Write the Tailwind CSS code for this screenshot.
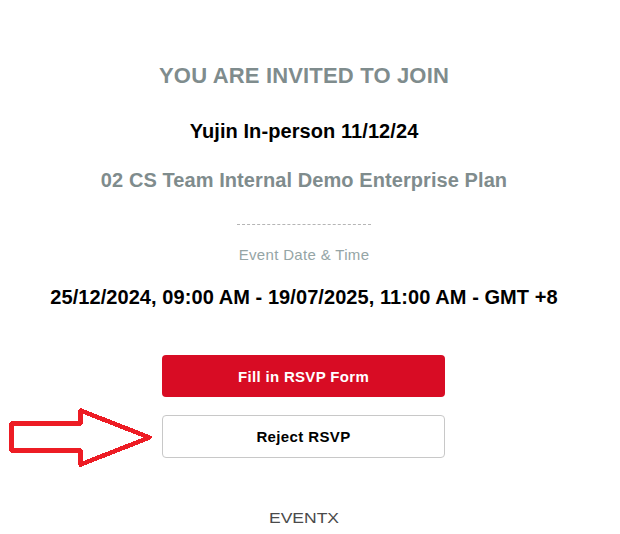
<!DOCTYPE html>
<html lang="en">
  <head>
    <meta charset="UTF-8" />
    <meta name="viewport" content="width=device-width, initial-scale=1.0" />
    <title>Event Invitation</title>
    <script src="https://cdn.jsdelivr.net/npm/@tailwindcss/browser@4"></script>
  </head>
  <body class="bg-white h-screen overflow-hidden font-['Liberation_Sans',Arial,sans-serif]">
    <main class="relative flex flex-col items-center w-[608px] pt-[61px] whitespace-nowrap text-black">
      <!-- Heading -->
      <h1 class="text-[22px] leading-[30px] font-bold tracking-[0.17px] text-[#7f8c8d]">
        YOU ARE INVITED TO JOIN
      </h1>
      <h2 class="mt-[25px] text-[20px] leading-[30px] font-bold tracking-[0.08px]">
        Yujin In-person 11/12/24
      </h2>
      <h3 class="mt-[19px] text-[20px] leading-[30px] font-bold tracking-[0.08px] text-[#7f8c8d]">
        02 CS Team Internal Demo Enterprise Plan
      </h3>

      <!-- Separator -->
      <hr class="mt-[29px] w-[134px] border-t border-dashed border-[#b5b5b5]" />

      <!-- Date and time -->
      <p class="mt-[20px] text-[15px] leading-[20px] tracking-[0.33px] text-[#95a5a6]">
        Event Date &amp; Time
      </p>
      <p class="mt-[17px] text-[20px] leading-[30px] font-bold tracking-[0.07px]">
        25/12/2024, 09:00 AM - 19/07/2025, 11:00 AM - GMT +8
      </p>

      <!-- Actions -->
      <div class="mt-[43px] mr-[1px] flex w-[283px] flex-col gap-[18px]">
        <button class="h-[42px] rounded bg-[#d80c24] pt-[2px] text-white text-[15px] font-bold tracking-[0.33px]">
          Fill in RSVP Form
        </button>
        <button class="h-[43px] rounded border border-[#c8c8c8] pt-[2px] text-[15px] font-bold tracking-[0.38px]">
          Reject RSVP
        </button>
      </div>

      <!-- Brand -->
      <svg class="mt-[50px]" width="70" height="22" viewBox="0 0 70 22" role="img" aria-label="EventX">
        <text x="0" y="15.3" textLength="70" lengthAdjust="spacingAndGlyphs" class="text-[14.5px] fill-[#4a4a4a]">EVENTX</text>
      </svg>

      <!-- Arrow pointing at the reject button -->
      <svg class="absolute left-0 top-[400px]" width="160" height="75" viewBox="0 0 160 75" fill="none" stroke="#ed1c24" stroke-width="4.5" stroke-linejoin="round" shape-rendering="crispEdges">
        <path d="M11.5 23.5H80.5V10.5L149.5 37.5L80.5 64.5V50.5H11.5Z" />
      </svg>
    </main>
  </body>
</html>
